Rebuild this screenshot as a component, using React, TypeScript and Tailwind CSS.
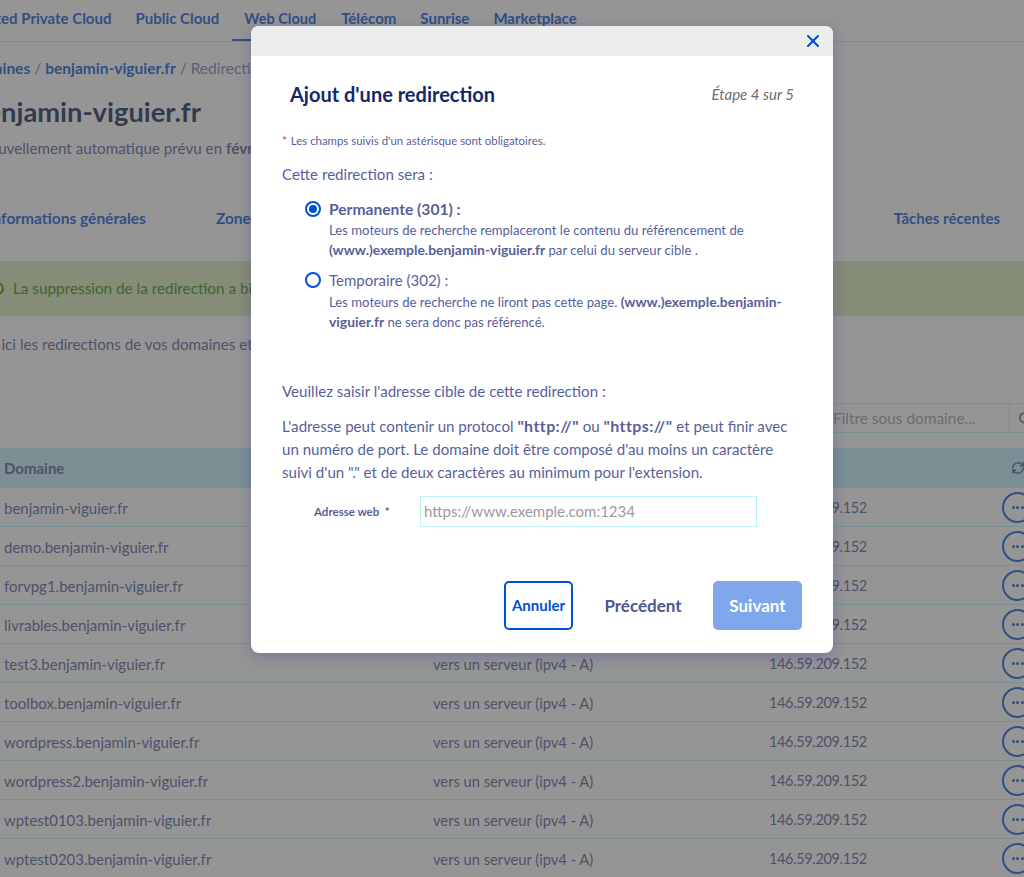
import { RefreshCw, Search, X } from "lucide-react";

const font = { fontFamily: "Lato, sans-serif" };

const navItems = ["Hosted Private Cloud", "Public Cloud", "Web Cloud", "Télécom", "Sunrise", "Marketplace"];

const rows = [
    "benjamin-viguier.fr",
    "demo.benjamin-viguier.fr",
    "forvpg1.benjamin-viguier.fr",
    "livrables.benjamin-viguier.fr",
    "test3.benjamin-viguier.fr",
    "toolbox.benjamin-viguier.fr",
    "wordpress.benjamin-viguier.fr",
    "wordpress2.benjamin-viguier.fr",
    "wptest0103.benjamin-viguier.fr",
    "wptest0203.benjamin-viguier.fr",
];

function Background() {
    return (
        <div className="w-[1024px] h-[877px] overflow-hidden bg-white text-[#4d5693]">
            {/* top nav */}
            <div className="h-[42px] border-b border-[#d9e3ef] flex gap-6 -ml-[31px] text-[15px] font-bold text-[#0050d7] whitespace-nowrap">
                {navItems.map((n) => (
                    <div key={n} className={n === "Web Cloud" ? "h-[41px] pt-[8px] -mx-3 ml-[-11px] mr-[-11px] px-3 text-[14.5px] leading-[22px] border-b-2 border-[#0050d7]" : "pt-[7px]"}>
                        {n}
                    </div>
                ))}
            </div>

            <div className="h-[40px] pt-[15px] -ml-[39px] text-[15.5px] whitespace-nowrap">
                <span className="font-bold text-[#0050d7]">Domaines</span>
                <span className="text-[#6c7aa8]"> / </span>
                <span className="font-bold text-[#0050d7]">benjamin-viguier.fr</span>
                <span className="text-[#6c7aa8]"> / </span>
                <span className="text-[#6c7aa8]">Redirection</span>
            </div>

            <h1 className="mt-[10px] -ml-[29px] text-[27.3px] leading-[40px] font-bold text-[#0a1a50] whitespace-nowrap">benjamin-viguier.fr</h1>
            <p className="mt-[6px] -ml-[36px] text-[15.2px] leading-[20px] whitespace-nowrap">
                Renouvellement automatique prévu en <b>février 2022</b>
            </p>

            {/* tabs */}
            <div className="mt-[49px] h-[54px] flex justify-between -ml-[12px] pr-[24px] text-[15px] font-bold text-[#0050d7]">
                <div className="flex gap-[70px]">
                    <span className="text-[15.5px]">Informations générales</span>
                    <span className="text-[15.5px]">Zone DNS</span>
                </div>
                <span>Tâches récentes</span>
            </div>

            {/* success banner */}
            <div className="h-[55px] bg-[#d6ebb6] flex items-center gap-[9px] -ml-[9px] text-[15.3px] text-[#2e8500] whitespace-nowrap">
                <div className="w-[13px] h-[13px] rounded-full border-2 border-[#2e8500] shrink-0" />
                <span>La suppression de la redirection a bien été prise en compte.</span>
            </div>

            <p className="mt-[18px] -ml-[68px] text-[15.2px] leading-[20px] whitespace-nowrap">
                Retrouver ici les redirections de vos domaines et sous-domaines.
            </p>

            {/* filter */}
            <div className="mt-[49px] flex justify-end -mr-[40px]">
                <div className="h-[30px] w-[241px] border border-[#bef1ff] flex text-[15.4px] text-[#9a9a9a]">
                    <div className="w-[186px] pl-[9px] leading-[28px] border-r border-[#bef1ff] whitespace-nowrap">Filtre sous domaine...</div>
                    <div className="flex-1 flex items-center pl-[8px] text-[#4d5693]">
                        <Search size={15} strokeWidth={2.5} />
                    </div>
                </div>
            </div>

            {/* table */}
            <div className="mt-[15px] h-[40px] bg-[#bef1ff] flex items-center pl-[4px] text-[15px] font-bold">
                <span className="flex-1">Domaine</span>
                <RefreshCw size={14} strokeWidth={2.5} className="mr-[-1px]" />
            </div>
            {rows.map((name) => (
                <div key={name} className="h-[39px] border-b border-[#bef1ff] flex items-center pl-[4px] text-[15px] whitespace-nowrap">
                    <span className="w-[429px] shrink-0 pt-[2px]">{name}</span>
                    <span className="w-[336px] shrink-0 pt-[2px] text-[14.7px]">vers un serveur (ipv4 - A)</span>
                    <span className="w-[233px] shrink-0 pt-[2px] text-[14.5px] tracking-[-0.35px]">146.59.209.152</span>
                    <div className="w-[31px] h-[31px] rounded-full border-2 border-[#0050d7] shrink-0 flex items-center justify-center gap-[1.5px]">
                        <i className="w-[3px] h-[3px] rounded-full bg-[#0050d7]" />
                        <i className="w-[3px] h-[3px] rounded-full bg-[#0050d7]" />
                        <i className="w-[3px] h-[3px] rounded-full bg-[#0050d7]" />
                    </div>
                </div>
            ))}
        </div>
    );
}

function Radio({ checked }: { checked?: boolean }) {
    return (
        <div className="w-[16px] h-[16px] rounded-full border-2 border-[#0050d7] flex items-center justify-center shrink-0 mt-[1px]">
            {checked && <div className="w-[8px] h-[8px] rounded-full bg-[#0050d7]" />}
        </div>
    );
}

function Modal() {
    return (
        <div className="w-[582px] h-[627px] bg-white rounded-[8px] overflow-hidden shadow-[0_4px_16px_rgba(0,14,156,0.2)] text-[#585f9b]">
            <div className="h-[30px] bg-[#eceeed] flex justify-end items-center pr-[10px] text-[#0050d7]">
                <X size={20} strokeWidth={2.5} />
            </div>

            <div className="pl-[31px] pr-[39px] pt-[24px]">
                <div className="flex justify-between items-center pl-[8px]">
                    <h2 className="text-[20px] leading-[28px] font-bold text-[#15266a]">Ajout d'une redirection</h2>
                    <span className="text-[15px] italic text-[#6e6e6e]">Étape 4 sur 5</span>
                </div>

                <p className="mt-[26px] text-[11.4px] leading-[14px]">
                    <span className="text-[#e01e3c] mr-[4px]">*</span>Les champs suivis d'un astérisque sont obligatoires.
                </p>

                <p className="mt-[16px] text-[15.1px] leading-[20px]">Cette redirection sera :</p>

                <div className="mt-[16px] ml-[23px] flex gap-[8px]">
                    <Radio checked />
                    <div>
                        <div className="-mt-[1px] text-[15.6px] leading-[20px] font-bold">Permanente (301) :</div>
                        <p className="text-[13.15px] leading-[20px] mt-[1px] whitespace-nowrap">
                            Les moteurs de recherche remplaceront le contenu du référencement de
                            <br />
                            <b className="text-[13.9px]">(www.)exemple.benjamin-viguier.fr</b> par celui du serveur cible .
                        </p>
                    </div>
                </div>

                <div className="mt-[11px] ml-[23px] flex gap-[8px]">
                    <Radio />
                    <div>
                        <div className="-mt-[1px] text-[15px] leading-[20px]">Temporaire (302) :</div>
                        <p className="text-[13.15px] leading-[20px] mt-[2px] whitespace-nowrap">
                            Les moteurs de recherche ne liront pas cette page. <b className="text-[13.9px]">(www.)exemple.benjamin-</b>
                            <br />
                            <b className="text-[13.9px]">viguier.fr</b> ne sera donc pas référencé.
                        </p>
                    </div>
                </div>

                <p className="mt-[49px] text-[15.1px] leading-[20px]">Veuillez saisir l'adresse cible de cette redirection :</p>
                <p className="mt-[13px] text-[15.1px] leading-[23px] whitespace-nowrap">
                    L'adresse peut contenir un protocol <b className="text-[16px] tracking-[0.4px]">"http://"</b> ou <b className="text-[16px] tracking-[0.4px]">"https://"</b> et peut finir avec
                    <br />
                    un numéro de port. Le domaine doit être composé d'au moins un caractère
                    <br />
                    suivi d'un "." et de deux caractères au minimum pour l'extension.
                </p>

                <div className="mt-[12px] flex items-center">
                    <label className="w-[138px] pl-[32px] text-[11.5px] font-bold">Adresse web&nbsp; *</label>
                    <div className="w-[337px] h-[31px] border border-[#bef1ff] pl-[3px] flex items-center text-[15px] text-[#9a9a9a]">
                        https://www.exemple.com:1234
                    </div>
                </div>

                <div className="mt-[54px] flex items-center justify-end -mr-[8px]">
                    <button className="w-[69px] h-[49px] rounded-[5px] border-2 border-[#0050d7] text-[15px] font-bold text-[#0050d7]">Annuler</button>
                    <button className="w-[140px] h-[49px] text-[17px] font-bold text-[#4d5693]">Précédent</button>
                    <button className="w-[89px] h-[49px] rounded-[5px] bg-[#80a7eb] text-[17px] font-bold text-white">Suivant</button>
                </div>
            </div>
        </div>
    );
}

export default function App() {
    return (
        <div className="relative w-[1024px] h-[877px] overflow-hidden" style={font}>
            <Background />
            {/* backdrop */}
            <div className="absolute inset-0 bg-[#4e4e4e]/60 pt-[26px] pl-[251px]">
                <Modal />
            </div>
        </div>
    );
}
